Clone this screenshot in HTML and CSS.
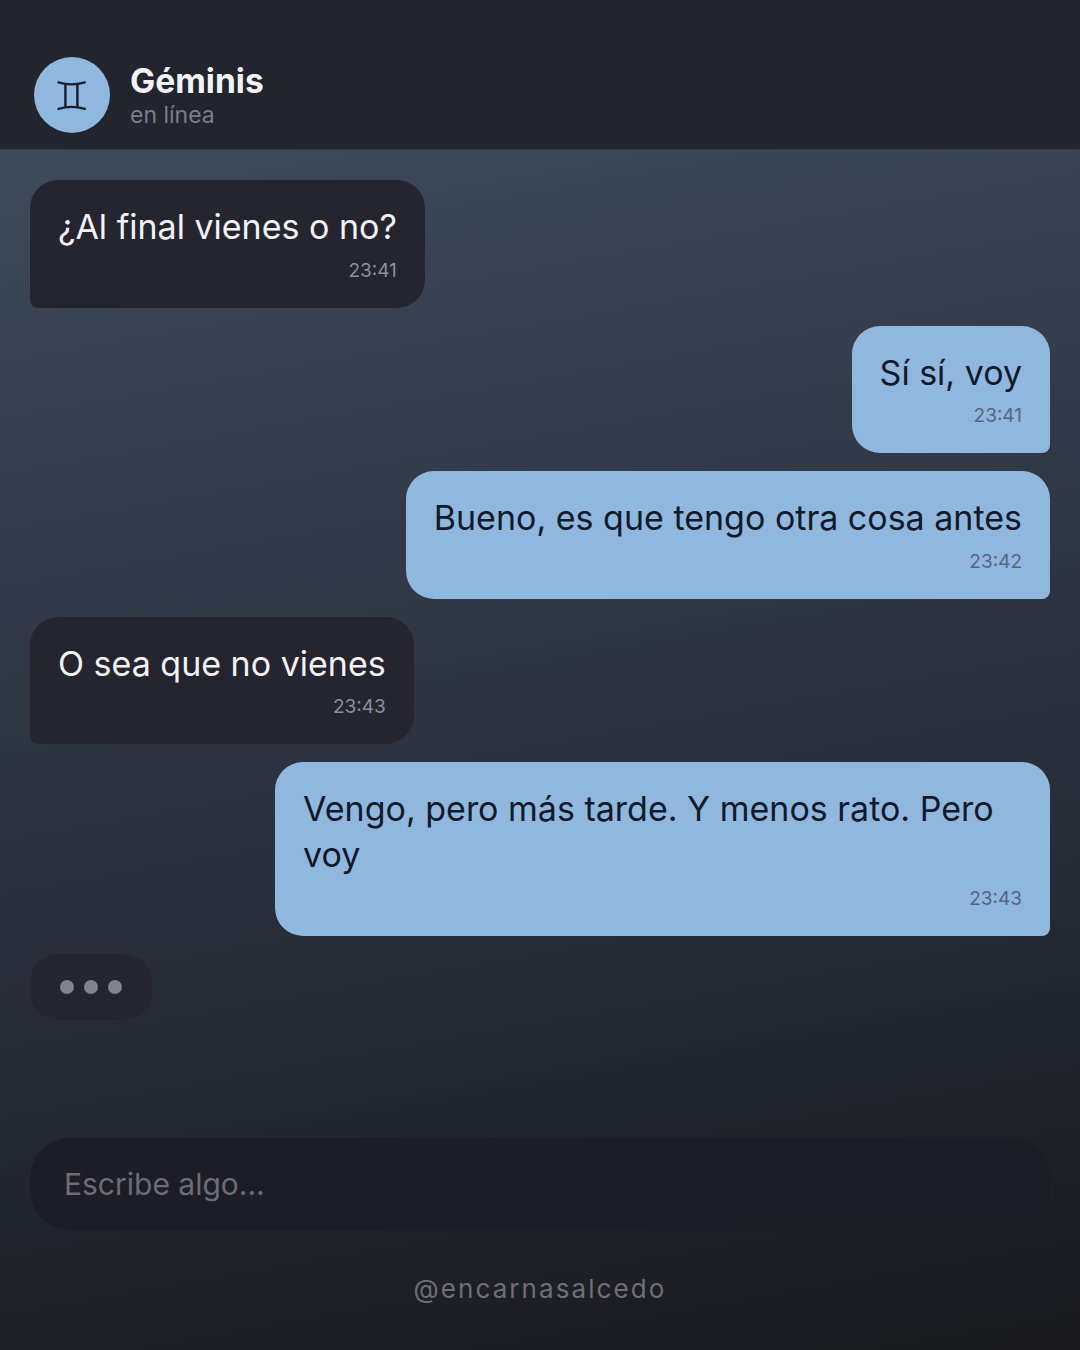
FILE: index.html
```html
<!DOCTYPE html>
<html lang="es">
<head>
    <meta charset="UTF-8">
    <meta name="viewport" content="width=device-width, initial-scale=1.0">
    <title>Géminis</title>
    <link rel="stylesheet" href="styles.css">
</head>
<body>
    <!-- Header -->
    <header class="chat-header">
        <div class="avatar">
            <svg class="avatar-icon" viewBox="0 0 30 32" width="30" height="32" aria-hidden="true">
                <path d="M1.500 3.400C9.500 5.800 19.500 5.800 27.800 3.400M1.500 29.800C9.500 27.400 19.500 27.400 27.800 29.800M8.400 5V28M20.400 5V28" />
            </svg>
        </div>
        <div class="contact">
            <div class="contact-name">Géminis</div>
            <div class="contact-status">en línea</div>
        </div>
    </header>

    <!-- Messages -->
    <main class="messages">
        <div class="bubble in">
            <p>¿Al final vienes o no?</p>
            <div class="time">23:41</div>
        </div>
        <div class="bubble out">
            <p>Sí sí, voy</p>
            <div class="time">23:41</div>
        </div>
        <div class="bubble out">
            <p>Bueno, es que tengo otra cosa antes</p>
            <div class="time">23:42</div>
        </div>
        <div class="bubble in">
            <p>O sea que no vienes</p>
            <div class="time">23:43</div>
        </div>
        <div class="bubble out">
            <p>Vengo, pero más tarde. Y menos rato. Pero voy</p>
            <div class="time">23:43</div>
        </div>
        <div class="typing">
            <span></span>
            <span></span>
            <span></span>
        </div>
    </main>

    <!-- Input -->
    <div class="input-bar">Escribe algo...</div>
    <footer class="handle">@encarnasalcedo</footer>
</body>
</html>
```

FILE: styles.css
```css
* {
    box-sizing: border-box;
    margin: 0;
    padding: 0;
}

html, body {
    height: 1350px;
    overflow: hidden;
}

body {
    display: flex;
    flex-direction: column;
    font-family: Inter, "Liberation Sans", sans-serif;
    background: linear-gradient(170deg, #445060 0%, #3a4556 18%, #2c323f 55%, #20242c 80%, #1a1a1e 100%);
}

.chat-header {
    display: flex;
    align-items: center;
    gap: 20px;
    height: 150px;
    padding: 40px 34px 0;
    background-color: #22242e;
    border-bottom: 1px solid #333946;
}

.avatar {
    display: flex;
    align-items: center;
    justify-content: center;
    width: 76px;
    height: 76px;
    border-radius: 50%;
    background-color: #90b7de;
}

.avatar-icon path {
    fill: none;
    stroke: #16202e;
    stroke-width: 2.400;
    stroke-linecap: round;
}

.contact-name {
    padding-top: 1px;
    font-size: 33.600px;
    font-weight: 700;
    line-height: 40px;
    color: #f2f2f7;
}

.contact-status {
    font-size: 23px;
    line-height: 29px;
    color: #7d7d8c;
}

.messages {
    flex: 1;
    display: flex;
    flex-direction: column;
    align-items: flex-start;
    gap: 18px;
    padding: 30px 30px 0;
}

.bubble {
    max-width: 775px;
    padding: 24px 28px 23px;
    border-radius: 28px;
    font-size: 34px;
    line-height: 46px;
}

.bubble.in {
    background-color: #252530;
    color: #f2f2f7;
    border-bottom-left-radius: 8px;
}

.bubble.out {
    align-self: flex-end;
    background-color: #90b7de;
    color: #111a2b;
    border-bottom-right-radius: 8px;
}

.time {
    margin-top: 6.500px;
    font-size: 19px;
    line-height: 28px;
    text-align: right;
}

.bubble.in .time {
    color: #8e8e9c;
}

.bubble.out .time {
    color: #56657e;
}

.typing {
    display: flex;
    gap: 10px;
    padding: 26px 30px;
    border-radius: 28px;
    background-color: #252530;
}

.typing span {
    width: 14px;
    height: 14px;
    border-radius: 50%;
    background-color: #82828f;
}

.input-bar {
    height: 92px;
    margin: 0 30px;
    padding: 0 34px;
    border-radius: 40px;
    background-color: #1d1d27;
    font-size: 30px;
    line-height: 92px;
    color: #6c6c78;
}

.handle {
    height: 120px;
    padding-top: 42px;
    font-size: 26px;
    line-height: 34px;
    letter-spacing: 2.080px;
    text-align: center;
    color: #6f6f7c;
}
```
